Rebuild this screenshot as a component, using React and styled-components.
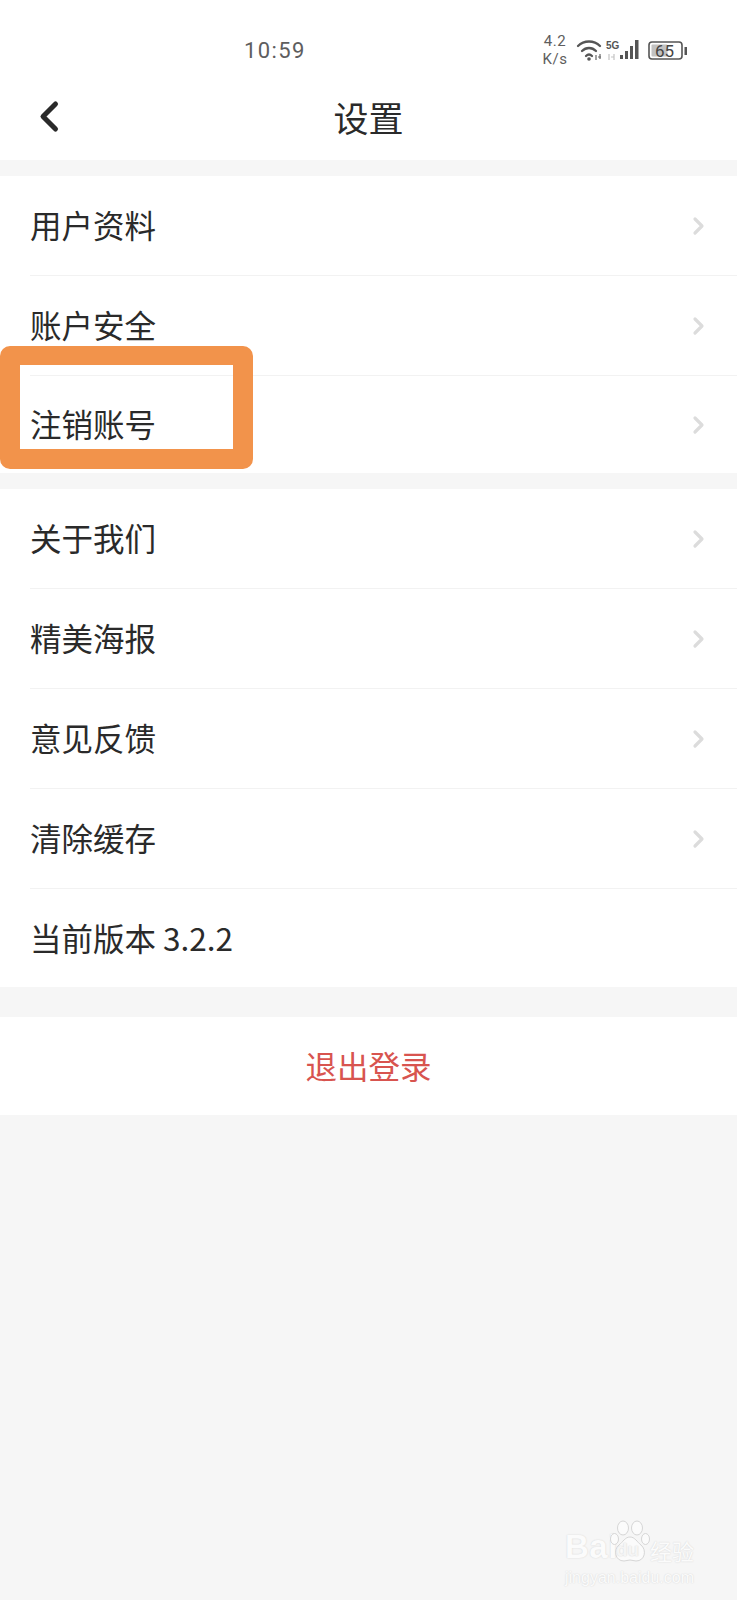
import React from "react";
import styled, { createGlobalStyle } from "styled-components";

const GlobalStyle = createGlobalStyle`
  html, body {
    margin: 0;
    padding: 0;
    background: #f6f6f6;
  }
  body {
    font-family: "Noto Sans CJK SC", "Noto Sans", sans-serif;
  }
`;

const Page = styled.div`
  position: relative;
  width: 737px;
  height: 1600px;
  overflow: hidden;
  background: #f6f6f6;
`;

const Top = styled.div`
  height: 160px;
  background: #fff;
  display: flex;
  flex-direction: column;
`;

const StatusBar = styled.div`
  height: 80px;
  padding: 20px 0 0 244px;
  box-sizing: border-box;
  display: flex;
  align-items: center;
`;

const Time = styled.div`
  font-family: "Roboto", sans-serif;
  font-size: 22px;
  letter-spacing: 1.4px;
  width: 295px;
  color: #5e5e5e;
`;

const Speed = styled.div`
  font-family: "Roboto", sans-serif;
  font-size: 15px;
  line-height: 18px;
  letter-spacing: 0.5px;
  width: 32px;
  margin-right: 4px;
  text-align: center;
  color: #5e5e5e;
`;

const StatusIcons = styled.svg`
  display: block;
`;

const NavBar = styled.div`
  flex: 1;
  position: relative;
  display: flex;
  align-items: center;
  justify-content: center;
  padding-bottom: 7px;
`;

const BackButton = styled.div`
  position: absolute;
  left: 38px;
  top: 19px;
  line-height: 0;
`;

const Title = styled.div`
  font-size: 35px;
  line-height: 40px;
  color: #2a2a2a;
`;

const Section = styled.div`
  background: #fff;
  margin-top: ${({ $gap }) => $gap}px;
  padding-left: 30px;
`;

const Row = styled.div`
  height: ${({ $h }) => $h || 100}px;
  box-sizing: border-box;
  display: flex;
  align-items: center;
  justify-content: space-between;
  padding: 0 31px 3px 0;
  border-bottom: ${({ $last }) => ($last ? "none" : "1px solid #f2f2f2")};
  font-size: 31.5px;
  color: #2a2a2a;
`;

const ChevronIcon = styled.svg`
  display: block;
  margin-top: 3px;
`;

const Logout = styled.div`
  height: 98px;
  margin-top: 30px;
  padding-bottom: 3px;
  box-sizing: border-box;
  background: #fff;
  display: flex;
  align-items: center;
  justify-content: center;
  font-size: 31.5px;
  color: #d8544f;
`;

const Highlight = styled.div`
  position: absolute;
  left: 0;
  top: 346px;
  width: 253px;
  height: 123px;
  box-sizing: border-box;
  border: 20px solid #f2934b;
  border-top-width: 19px;
  border-radius: 10px;
`;

const Watermark = styled.div`
  position: absolute;
  left: 565px;
  top: 1520px;
  width: 134px;
  color: #fbfbfb;
  text-shadow: 0 0 1.5px #cfcfcf;
`;

const MarkLine = styled.div`
  height: 44px;
  display: flex;
  align-items: flex-end;
  font-family: "Liberation Sans", sans-serif;
  font-weight: 700;
  font-size: 33px;
  line-height: 34px;
`;

const MarkBai = styled.span`
  width: 45px;
  letter-spacing: 0.5px;
`;

const PawBox = styled.div`
  position: relative;
  width: 40px;
  height: 44px;
  flex: none;
`;

const PawDu = styled.span`
  position: absolute;
  left: 6px;
  bottom: 5px;
  font-size: 19px;
  line-height: 19px;
  color: #f5f5f5;
`;

const MarkCn = styled.span`
  font-family: "Noto Sans CJK SC", sans-serif;
  font-size: 22px;
  font-weight: 400;
  line-height: 28px;
  white-space: nowrap;
`;

const MarkUrl = styled.div`
  font-family: "Liberation Sans", sans-serif;
  font-size: 16px;
  line-height: 16px;
  margin-top: 6px;
  white-space: nowrap;
`;

const Chevron = () => (
  <ChevronIcon width="14" height="20" viewBox="0 0 14 20" fill="none">
    <path d="M3 3l7 7-7 7" stroke="#dcdcdc" strokeWidth="3.2" strokeLinecap="round" strokeLinejoin="round" />
  </ChevronIcon>
);

const Paw = () => (
  <svg width="40" height="44" viewBox="0 0 40 44" fill="#fbfbfb" stroke="#d6d6d6" strokeWidth="1">
    <ellipse cx="13" cy="8" rx="5.5" ry="7" />
    <ellipse cx="27" cy="8" rx="5.5" ry="7" />
    <ellipse cx="4.5" cy="19" rx="4" ry="5.5" />
    <ellipse cx="35.5" cy="19" rx="4" ry="5.5" />
    <path d="M20 17c-5 0-7 5-11 8-6 5-4 16 5 16 2 0 4-1 6-1s4 1 6 1c9 0 11-11 5-16-4-3-6-8-11-8z" />
  </svg>
);

const firstGroup = ["用户资料", "账户安全", "注销账号"];
const secondGroup = ["关于我们", "精美海报", "意见反馈", "清除缓存"];

const App = () => (
  <Page>
    <GlobalStyle />
    <Top>
      <StatusBar>
        <Time>10:59</Time>
        <Speed>4.2<br />K/s</Speed>
        <StatusIcons width="115" height="36" viewBox="575 32 115 36" fill="none">
          {/* wifi */}
          <path d="M578 46c6-6 16-6 22 0M582 51c4-4 10-4 14 0M586 56c2-2 4-2 6 0" stroke="#555" strokeWidth="2.3" strokeLinecap="round" />
          <circle cx="589" cy="59" r="1.8" fill="#555" />
          <path d="M596 55v5M598 57h3M600 54v5" stroke="#666" strokeWidth="1.2" />
          {/* 5G */}
          <text x="606" y="49" fontFamily="Liberation Sans" fontSize="10" fontWeight="700" fill="#555">5G</text>
          <path d="M609 54v6M611 57h3M614 54v6" stroke="#c4c4c4" strokeWidth="1.2" />
          {/* signal */}
          <rect x="620" y="55" width="3" height="4" fill="#555" />
          <rect x="625" y="51" width="3" height="8" fill="#555" />
          <rect x="630" y="46" width="3" height="13" fill="#555" />
          <rect x="635" y="40" width="3.5" height="19" fill="#555" />
          {/* battery */}
          <rect x="649" y="42" width="33" height="17" rx="3" stroke="#555" strokeWidth="1.6" />
          <rect x="651.5" y="44.5" width="16" height="12" rx="1" fill="#c2c2c2" />
          <text x="655" y="57" fontFamily="Roboto" fontSize="17" fill="#444">65</text>
          <rect x="684.5" y="47" width="2.5" height="8" fill="#555" />
        </StatusIcons>
      </StatusBar>
      <NavBar>
        <BackButton>
          <svg width="24" height="36" viewBox="0 0 24 36" fill="none">
            <path d="M17.5 5L5 17.5 17.5 30" stroke="#2a2a2a" strokeWidth="5" strokeLinecap="round" strokeLinejoin="round" />
          </svg>
        </BackButton>
        <Title>设置</Title>
      </NavBar>
    </Top>

    <Section $gap={16}>
      {firstGroup.map((label, i) => (
        <Row key={label} $last={i === firstGroup.length - 1} $h={i === 2 ? 97 : 100}>
          {label}
          <Chevron />
        </Row>
      ))}
    </Section>

    <Section $gap={16}>
      {secondGroup.map((label) => (
        <Row key={label}>
          {label}
          <Chevron />
        </Row>
      ))}
      <Row $last $h={98}>当前版本 3.2.2</Row>
    </Section>

    <Logout>退出登录</Logout>

    <Highlight />

    <Watermark>
      <MarkLine>
        <MarkBai>Bai</MarkBai>
        <PawBox>
          <Paw />
          <PawDu>du</PawDu>
        </PawBox>
        <MarkCn>经验</MarkCn>
      </MarkLine>
      <MarkUrl>jingyan.baidu.com</MarkUrl>
    </Watermark>
  </Page>
);

export default App;
